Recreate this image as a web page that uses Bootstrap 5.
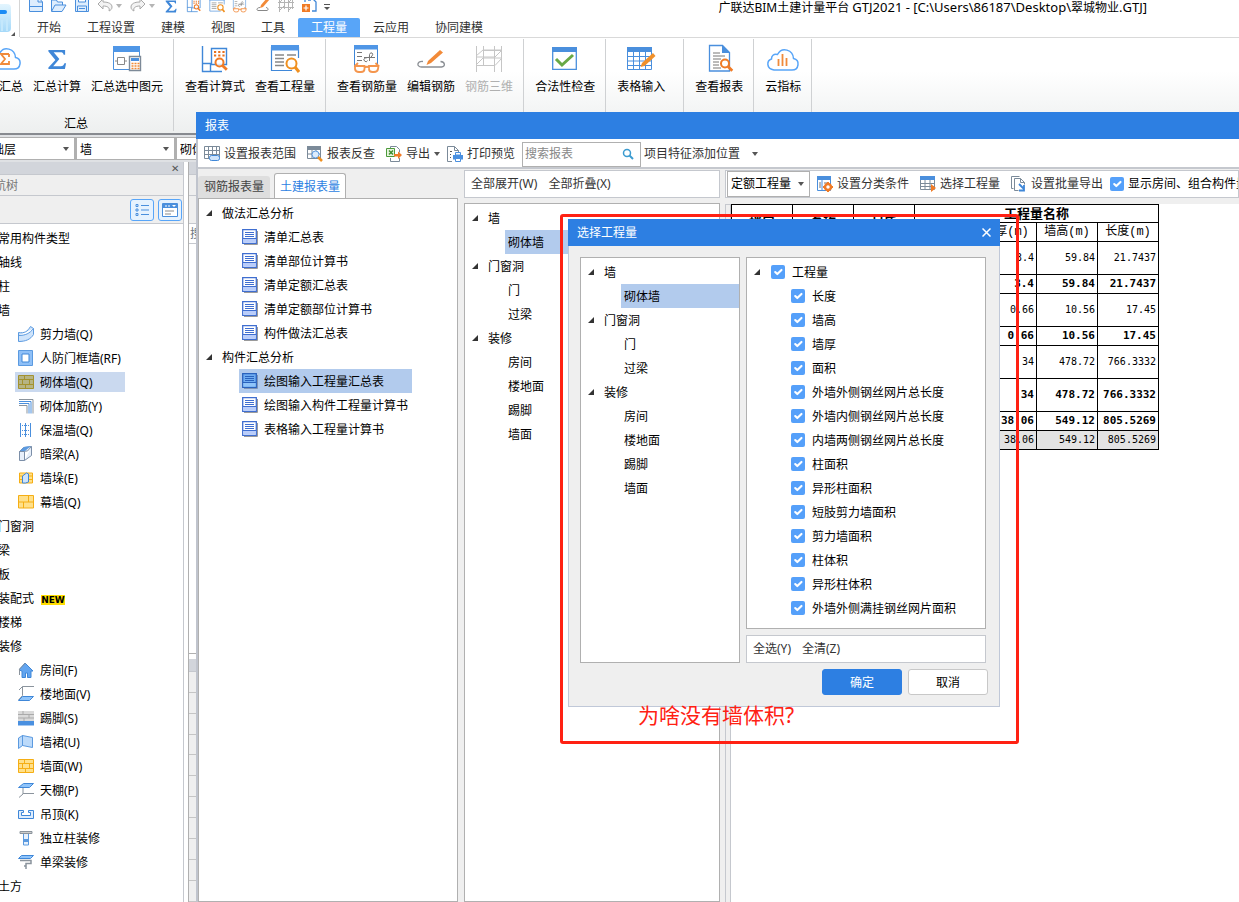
<!DOCTYPE html>
<html lang="zh-CN">
<head>
<meta charset="utf-8">
<meta name="viewport" content="width=device-width, initial-scale=1">
<title>广联达BIM土建计量平台 GTJ2021</title>
<link href="https://cdn.jsdelivr.net/npm/bootstrap@5.3.0/dist/css/bootstrap.min.css" rel="stylesheet">
<style>
  :root { --brand: #2d7fe2; --pick: #b2cbed; --face: #efefef; --edge: #b0b0b0; --soft: #c5c8ce; }
  body { font: 12px/24px "Noto Sans", "Noto Sans CJK SC", sans-serif; color: #000; background: #fff; }
  ul { list-style: none; margin: 0; padding: 0; }
  button, input, select { font: inherit; color: inherit; }
  svg { display: block; flex: none; }
  .ic16 { width: 16px; height: 16px; }
  .ic30 { width: 30px; height: 30px; }
  .plain-btn { border: 0; background: none; padding: 0; white-space: nowrap; line-height: 18px; }
  .caret { width: 0; height: 0; border: 3px solid transparent; border-top: 4px solid #555; border-bottom: 0; flex: none; }
  .caret-pale { border-top-color: #b5b5b5; }

  /* title area */
  .app-logo { width: 20px; height: 37px; border-right: 1px solid #d5d5d5; }
  .top-row { height: 18px; padding-left: 4px; }
  .quick { width: 23px; height: 13px; display: flex; justify-content: center; align-items: end; }
  .app-title { margin: 0 92px 0 auto; font-size: 12px; font-weight: 400; line-height: 14px; height: 18px; white-space: nowrap; }
  .app-path { font-size: 13px; }
  .menu-tabs { height: 20px; padding-left: 4px; border-bottom: 1px solid #d9d9d9; }
  .menu-tabs a { padding: 0 13px; line-height: 19px; color: #333; text-decoration: none; white-space: nowrap; }
  .menu-tabs a.on { background: #58a5f8; color: #fff; border-radius: 2px 2px 0 0; }

  /* ribbon */
  .ribbon { height: 97px; padding-top: 1px; background: linear-gradient(#fff 35%, #edefef); border-bottom: 2px solid #878a90; }
  .rgroup { padding: 5px 5px 0 6px; height: 92px; border-right: 1px solid #cfd1d3; }
  .rgroup.cut { margin-left: -24px; }
  .rgroup.wide { min-width: 78px; }
  .ritem { padding: 0 5px; display: flex; flex-direction: column; align-items: center; line-height: 26px; }
  .ritem:disabled { color: #b0b0b0; }
  .rlabel { line-height: 18px; padding: 15px 0 0 2px; text-align: center; }

  /* selector row */
  .pick-row { height: 27px; padding: 2px 0 1px; margin-left: -24px; background: #dfe1e4; }
  .pick-row select { width: 100px; height: 23px; border: 1px solid var(--edge); border-right-width: 2px; padding: 0 3px; border-radius: 0; }
  .flat-select { appearance: none; background: #fff url("data:image/svg+xml,%3Csvg xmlns='http://www.w3.org/2000/svg' width='6' height='4'%3E%3Cpath d='M0 0h6L3 4z' fill='%23555'/%3E%3C/svg%3E") no-repeat right 5px center; }

  /* navigation */
  .nav-panel { width: 184px; border-right: 1px solid var(--soft); overflow: hidden; }
  .pane-cap { height: 13px; background: #d2d5db; border-bottom: 1px solid var(--soft); line-height: 12px; font-size: 10px; color: #555; }
  .nav-name { height: 21px; line-height: 21px; background: var(--face); color: #777; border-bottom: 1px solid var(--soft); margin-left: -18px; }
  .nav-tools { height: 28px; background: var(--face); border-bottom: 1px solid var(--soft); gap: 4px; padding: 0 1px; }
  .mode-btn { width: 24px; height: 22px; border: 1px solid #58a5f8; border-radius: 3px; background: #e6f2fe; padding: 0; display: flex; align-items: center; justify-content: center; }
  .nav-tree { padding-top: 2px; margin-left: -2px; }
  .nav-tree li { white-space: nowrap; height: 24px; line-height: 26px; }
  .nav-tree .kid { display: flex; align-items: start; gap: 6px; margin-left: 17px; padding-left: 3px; width: 110px; }
  .nav-tree svg { align-self: center; }
  .nav-tree .kid.on { height: 20px; line-height: 22px; margin-top: 2px; margin-bottom: 2px; background: #cad9ef; }
  .new-tag { font: bold 9px/10px "DejaVu Sans", sans-serif; background: #fd0; margin-left: 4px; }
  .under { width: 120px; margin-left: 4px; border-left: 1px solid var(--edge); }
  .under-list { flex: 0 0 410px; border-bottom: 1px solid var(--edge); margin-bottom: 5px; }
  .under-row { height: 21px; background: var(--face); border-bottom: 1px solid #c5c5c5; }

  /* report window */
  .report { left: 196px; top: 112px; right: 0; bottom: 0; background: var(--face); overflow: hidden; }
  .side-rule { border-left: 2px solid #c0c4cd; }
  .win-cap { background: var(--brand); color: #fff; height: 27px; line-height: 27px; padding-left: 9px; }
  .bar { height: 30px; background: #fff; border-bottom: 2px solid var(--soft); padding: 2px 2px 0; gap: 3px; color: #333; flex: none; }
  .bar .plain-btn { display: flex; align-items: center; gap: 4px; padding: 4px; }
  .find { width: 119px; height: 25px; border: 1px solid var(--edge); background: #fff; padding: 0 6px 0 2px; }
  .find input { border: 0; width: 90px; padding: 0; outline: 0; background: none; }
  .find input::placeholder { color: #888; opacity: 1; }
  .tabs-row { height: 29px; padding-top: 4px; flex: none; }
  .tabs-row button { border: 0; background: #dedede; color: #444; padding: 0 6px; height: 22px; margin-top: 3px; line-height: 22px; border-radius: 3px 3px 0 0; }
  .tabs-row .on { background: #fff; color: var(--brand); border: 1px solid var(--edge); border-bottom: 0; height: 25px; margin: 0 0 0 4px; padding: 0 5px; line-height: 25px; }
  .frame { border: 1px solid var(--edge); background: #fff; }
  .strip { height: 28px; border: 1px solid var(--soft); background: #fff; color: #333; padding: 0 2px; gap: 3px; flex: none; }
  .strip .plain-btn { padding: 4px; display: flex; align-items: center; gap: 4px; }
  .c1 { width: 260px; } .c2 { width: 256px; margin: 1px 5px 0 6px; } .c3 { min-width: 0; margin-top: 1px; }
  .c2 .tree { margin-top: 5px; }
  .c3 .strip { padding-left: 1px; }
  .tree { padding-top: 2px; }
  .tree li { display: flex; align-items: start; height: 24px; line-height: 26px; white-space: nowrap; }
  .tree li > svg, .tree li > input, .tree .top::before { align-self: center; }
  .tree .top::before { content: ""; width: 0; height: 0; margin: 0 10px 0 7px; border-left: 6px solid transparent; border-bottom: 6px solid #333; }
  .tree .kid { margin-left: 40px; padding-left: 3px; }
  .tree .kid.doc { gap: 6px; width: 173px; }
  .tree .on { background: var(--pick); }
  .tree .tick { gap: 7px; }
  .tree .kid.tick { padding-left: 4px; }
  .form-check-input.sq { width: 14px; height: 14px; margin: 0; border: 0; border-radius: 2px; background-color: #55a0fa; flex: none; }
  .tree .top.tick::before { margin-right: 4px; }
  .unit { width: 83px; height: 26px; border: 1px solid var(--edge); padding: 0 3px; color: #000; }
  .sheet-area { margin-top: 6px; }
  .gutter { width: 6px; background: var(--face); border: 1px solid var(--soft); border-bottom: 0; }

  .sheet { border-collapse: collapse; table-layout: fixed; width: 428px; font: 10px/12px "DejaVu Sans Mono", "Noto Sans CJK SC", monospace; }
  .sheet th, .sheet td { border: 1px solid #000; padding: 0 2px; text-align: right; white-space: nowrap; overflow: hidden; height: 33px; }
  .sheet th { font-weight: bold; font-size: 13px; text-align: center; height: 18px; }
  .sheet .sub th { font-family: "Liberation Mono", "Noto Sans CJK SC", monospace; font-weight: normal; font-size: 12px; height: 19px; padding: 0; }
  .sheet .sum td { font-weight: bold; font-size: 11px; }
  .sheet .low td { height: 19px; }
  .sheet .end td { background: #e3e3e3; }

  /* quantity dialog */
  .qty { left: 372px; top: 107px; width: 432px; height: 488px; border: 1px solid #c0c8d8; background: var(--face); }
  .qty .win-cap { margin: -1px -1px 0; padding: 0 9px; }
  .qty-body { padding: 11px 13px 6px 11px; gap: 6px; }
  .qty .strip { margin-top: 6px; }
  .q-left { width: 160px; }
  .q-foot { gap: 6px; padding: 0 11px 11px; }
  .q-btn { width: 80px; height: 26px; border-radius: 3px; border: 1px solid #c8c8c8; background: #fff; line-height: 26px; padding: 0; }
  .q-btn.ok { background: var(--brand); border-color: var(--brand); color: #fff; }

  .callout { left: 560px; top: 214px; width: 459px; height: 530px; border: 3px solid #ff2113; border-radius: 3px; color: #ff2113; font-size: 21px; line-height: 30px; padding: 0 0 11px 75px; pointer-events: none; }
</style>
</head>
<body>
<svg width="0" height="0" class="position-absolute">
  <symbol id="doc" viewBox="0 0 16 16"><path d="M2 15.500h13.500V2" stroke="#9a9a9a" fill="none"/><path d="M.7.7h13.6v13.600H.7z" fill="#fff" stroke="#3f6ed0" stroke-width="1.300"/><path d="M1.300 10h12.400v3.700H1.300z" fill="#b9cdfb"/><path d="M3 3.500h9M3 5.500h9M3 7.500h9M1 9.500h13" stroke="#3f6ed0"/></symbol>
  <symbol id="docon" viewBox="0 0 16 16"><path d="M2 15.500h13.500V2" stroke="#7d93b5" fill="none"/><path d="M.7.7h13.600v13.600H.7z" fill="#6fadf2" stroke="#2a62bd" stroke-width="1.300"/><path d="M1.300 10h12.400v3.700H1.300z" fill="#8fc4fa"/><path d="M3 3.500h9M3 5.500h9M3 7.500h9M1 9.500h13" stroke="#2a62bd"/></symbol>
  <symbol id="brick" viewBox="0 0 16 14"><path d="M.5.500h15v13H.5zM.5 4.500h15M.5 9.500h15M6.500.5v4M11.500 4.500v5M4.500 4.500v5M7.500 9.500v4" fill="#ffe08a" stroke="#f5ae14"/></symbol>
  <symbol id="sigma" viewBox="0 0 20 22"><path d="M1 1h17.500v5h-1.500c-.5-2-1.500-2.600-3.500-2.600H6.500L12.500 10.500 6 18h8c2.200 0 3-.8 3.800-3H19.500L18.300 21H1v-1.500L8.300 11.500 1 2.500z" fill="#3f87d8"/></symbol>
  <symbol id="lens" viewBox="0 0 14 14"><circle cx="5.500" cy="5.500" r="4" fill="#fff" fill-opacity=".8" stroke="#f07b26" stroke-width="2"/><path d="M8.500 8.500l4.300 4.300" stroke="#f07b26" stroke-width="2.800"/></symbol>
  <symbol id="r-sel" viewBox="0 0 30 30"><path d="M1.500 3v22.500H17M27.500 3v11" fill="#fff" stroke="#4a8fdd"/><path d="M1 2h27v6H1z" fill="#4f96e6"/><path d="M5.500 13.500h7v7h-7zM3 17h2M13 17h2" fill="none" stroke="#888"/><path d="M17.500 12.500h11v14h-11z" fill="#fff" stroke="#7d8a98" stroke-width="1.400"/><path d="M19 14h8v3h-8z" fill="#4a8fdd"/><path d="M19.500 19.500h2m1 0h2m1 0h2M19.500 22h2m1 0h2m1 0h2M19.500 24.500h2m1 0h2m1 0h2" stroke="#f08a35" stroke-width="1.500"/></symbol>
  <symbol id="r-calc" viewBox="0 0 30 30"><path d="M2.500 2v25.500H22M2.500 19.500h8v8" fill="none" stroke="#3f87d8" stroke-width="1.400"/><path d="M11.500 4.500h15v16h-15z" fill="#fff" stroke="#3f87d8" stroke-width="1.400"/><path d="M14 8h2.200m2 0h2.200m2 0h2.200M14 11.500h2.200m2 0h2.200m2 0h2.200" stroke="#e8701c" stroke-width="2.200"/><use href="#lens" x="14" y="13" width="14" height="14"/></symbol>
  <symbol id="r-qty" viewBox="0 0 30 30"><path d="M1.500 3v23.500H22M28.500 3v11" fill="none" stroke="#3f87d8" stroke-width="1.200"/><path d="M1 1h28v5.500H1z" fill="#4f96e6"/><path d="M5 11h9M5 14.500h9M5 18h9M5 21.500h9M17 11h9" stroke="#888" stroke-width="1.300"/><circle cx="21.500" cy="19.500" r="5" fill="#fff" stroke="#f0901f" stroke-width="2"/><path d="M25 23l4 5" stroke="#f0901f" stroke-width="3"/></symbol>
  <symbol id="r-bar" viewBox="0 0 30 30"><path d="M2.500 3v20M25.500 3v20" stroke="#3f87d8"/><path d="M2 1h24v4.500H2z" fill="#4f96e6"/><path d="M5 8.500h5M5 12.500h5M5 16.500h5M12 13.500h11M17.500 17V10.500q1-2.500 2.500-1.500t0 3-2.500 1.500-4 .5-1 3 3-.5" fill="none" stroke="#777"/><path d="M3 22h9.500v3q0 3-3.500 3H7q-3.500 0-4-3zM17 22h9.500l-.5 3q-.5 3-4 3h-1.500q-3.500 0-3.500-3zM12.500 23.500q2.500-1.500 5 0M3 22l3-3M26.500 22l-3-3" fill="#fff" stroke="#f4954d" stroke-width="1.800"/></symbol>
  <symbol id="r-edit" viewBox="0 0 30 30"><path d="M7 17.500c-6-.5-7 5-1.500 5.500h20c4-.5 4-5-1-5.500" fill="none" stroke="#8b8f94" stroke-width="1.300"/><path d="M10.500 21l1.500-4L24 6l3 2.500L15 19z" fill="#f28a38"/></symbol>
  <symbol id="r-net" viewBox="0 0 30 30"><path d="M2.500 2v26M9.500 2v20M20.500 2v26M27.500 2v26M2 12l7-6h19l-7 7H2M2 21l7-7h19M2 21.500h19l7-7.500M9 6.500h19" fill="none" stroke="#c6c6c6"/></symbol>
  <symbol id="r-check" viewBox="0 0 30 30"><path d="M2.700 4v21.300h23.600V4" fill="#fff" stroke="#4a8fdd" stroke-width="1.300"/><path d="M2 3h25v5H2z" fill="#4a8fdd"/><path d="M6 15l6 6L23 11" fill="none" stroke="#68a845" stroke-width="3"/></symbol>
  <symbol id="r-table" viewBox="0 0 30 30"><path d="M1.500 4v21.500h24V4M1 12.500h24M1 17h24M1 21.500h24M7.500 7v18M13.500 7v18M19.500 7v18" fill="none" stroke="#4a8fdd"/><path d="M1 3h25v5H1z" fill="#4a8fdd"/><path d="M14.500 23l1.500-4L27 9l2.500 3L18.500 22z" fill="#f0902a"/></symbol>
  <symbol id="r-doc" viewBox="0 0 30 30"><path d="M5.500 1.500h13l7 7V27h-20z" fill="#fff" stroke="#4a8fdd" stroke-width="1.300"/><path d="M18 1v8h8" fill="#4a8fdd"/><path d="M9 9h7M9 12h12M9 15h8M9 18h6M9 21h6M9 24h8" stroke="#777"/><use href="#lens" x="15.500" y="14" width="14" height="14"/></symbol>
  <symbol id="r-cloud" viewBox="0 0 34 30"><path d="M8 26h18c7 0 8.500-10 1.500-11.500C27 6 16 2 11.500 10.500 7.500 9.500 5.500 12 5.500 15 .5 16.500 0 25 8 26z" fill="#fff" stroke="#58a5f8" stroke-width="1.500"/><path d="M12.500 22v-7M16.500 22V10M20.500 22v-8" stroke="#f08a3a" stroke-width="1.800"/></symbol>
  <symbol id="r-sum" viewBox="0 0 34 30"><path d="M8 25h18c7 0 8.500-10 1.500-11.500C27 5 16 1 11.500 9.500 7.500 8.500 5.500 11 5.500 14 .5 15.500 0 24 8 25z" fill="#fff" stroke="#58a5f8" stroke-width="1.500"/><path d="M21 10h-8l4 5-4 5h8v-3M21 10v3" fill="none" stroke="#f08a3a" stroke-width="1.800"/></symbol>
  <symbol id="grid" viewBox="0 0 16 16"><path d="M.5.500h15v12H.5zM.5 4.500h15M.5 8.500h15M4.500.500v12M8.500.500v12M12.500.500v12" fill="#fff" stroke="#7b8a99"/></symbol>
</svg>

<div class="position-relative d-flex flex-column vh-100 overflow-hidden">
  <header class="d-flex flex-shrink-0">
    <div class="app-logo">
      <svg width="18" height="37" viewBox="0 0 18 37"><defs><linearGradient id="lg" x1="0" y1="0" x2="0" y2="1"><stop offset="0" stop-color="#e3f5fe"/><stop offset="1" stop-color="#a5d9f9"/></linearGradient></defs><rect x="-12" y="4" width="23" height="28" rx="4" fill="url(#lg)"/><path d="M0 12h5" stroke="#1c8cf5" stroke-width="4" stroke-linecap="round"/><path d="M2 31V20M7 31V19" stroke="#c4e8fc" stroke-width="2"/><path d="M15 32v4h-4z" fill="#555"/></svg>
    </div>
    <div class="flex-grow-1">
      <div class="top-row d-flex">
        <button class="plain-btn quick" aria-label="新建"><svg width="16" height="14" viewBox="0 0 16 14"><path d="M1.500-2v14.500h13V3L10-2M10-2v5h4.500M1.500 7.500h13" fill="#deedfd" stroke="#4a8fdd"/></svg></button>
        <button class="plain-btn quick" aria-label="打开"><svg width="17" height="14" viewBox="0 0 17 14"><path d="M1.500 12V1h5l1 2h5v3M1.500 12.500L5 6h11l-4 6.500z" fill="#deedfd" stroke="#4a8fdd"/></svg></button>
        <button class="plain-btn quick" aria-label="保存"><svg width="16" height="14" viewBox="0 0 16 14"><path d="M1.500-2h13v14.500h-13zM4.500-1v4h7v-4M3.500 12V7h9v5M5 9.500h6" fill="#deedfd" stroke="#4a8fdd"/></svg></button>
        <button class="plain-btn quick" aria-label="撤销"><svg width="16" height="14" viewBox="0 0 16 14"><path d="M1 5l5-5v3c6 0 9 2 9 5 0 2-1 3-3 4 1-3-1-5-6-5v3z" fill="#f3f3f3" stroke="#a9a9a9"/></svg></button>
        <span class="caret caret-pale mt-1"></span><span class="ps-1"></span>
        <button class="plain-btn quick" aria-label="重做"><svg width="16" height="14" viewBox="0 0 16 14"><path d="M15 5l-5-5v3c-6 0-9 2-9 5 0 2 1 3 3 4-1-3 1-5 6-5v3z" fill="#f3f3f3" stroke="#a9a9a9"/></svg></button>
        <span class="caret caret-pale mt-1"></span><span class="ps-1"></span>
        <button class="plain-btn quick" aria-label="汇总"><svg width="12" height="13"><use href="#sigma"/></svg></button>
        <button class="plain-btn quick" aria-label="查看计算式"><svg class="ic16"><use href="#r-calc"/></svg></button>
        <button class="plain-btn quick" aria-label="查看工程量"><svg class="ic16"><use href="#r-qty"/></svg></button>
        <button class="plain-btn quick" aria-label="查看钢筋量"><svg class="ic16"><use href="#r-bar"/></svg></button>
        <button class="plain-btn quick" aria-label="编辑钢筋"><svg width="16" height="14" viewBox="0 0 16 14"><path d="M5 8.500c-3 0-4 2.500-2 3h9c2-.5 1-3-1-3" fill="none" stroke="#888"/><path d="M5 9l1-3 6-7 3 1-7 8z" fill="#f28a38"/></svg></button>
        <button class="plain-btn quick" aria-label="钢筋三维"><svg class="ic16" viewBox="0 0 16 16"><path d="M1.500 0v15M6.500 0v12M10.500 0v15M14.500 0v12M0 5.500h16M0 10.500h16M1 14L6 9M10 14l5-5M1 6l4-4M10 6l4-4M4 2.500h12" fill="none" stroke="#b5b5b5"/></svg></button>
        <button class="plain-btn quick" aria-label="添加"><svg width="16" height="14" viewBox="0 0 16 14"><path d="M4-1v4M12 0l3 3v9h-4M7 1h3" fill="none" stroke="#3f87d8" stroke-width="1.300"/><path d="M1 5h8v8H1z" fill="#f07b26"/><path d="M5 6.500v5M2.500 9h5" stroke="#fff" stroke-width="1.200"/></svg></button>
        <span class="ms-1 mt-1"><svg width="6" height="7"><path d="M0 .5h6" stroke="#555"/><path d="M0 3h6L3 6z" fill="#555"/></svg></span>
        <h1 class="app-title">广联达BIM土建计量平台 <span class="app-path">GTJ2021 - [C:\Users\86187\Desktop\</span>翠城物业<span class="app-path">.GTJ]</span></h1>
      </div>
      <nav class="menu-tabs d-flex">
        <a href="#">开始</a><a href="#">工程设置</a><a href="#">建模</a><a href="#">视图</a><a href="#">工具</a><a href="#" class="on">工程量</a><a href="#">云应用</a><a href="#">协同建模</a>
      </nav>
    </div>
  </header>

  <div class="ribbon d-flex flex-shrink-0">
    <div class="rgroup cut">
      <div class="d-flex">
        <button class="plain-btn ritem"><svg width="34" height="30"><use href="#r-sum"/></svg>云汇总</button>
        <button class="plain-btn ritem"><svg class="ic30" viewBox="0 0 30 30"><use href="#sigma" x="5" y="5" width="20" height="21"/></svg>汇总计算</button>
        <button class="plain-btn ritem"><svg class="ic30"><use href="#r-sel"/></svg>汇总选中图元</button>
      </div>
      <div class="rlabel">汇总</div>
    </div>
    <div class="rgroup d-flex align-items-start">
      <button class="plain-btn ritem"><svg class="ic30"><use href="#r-calc"/></svg>查看计算式</button>
      <button class="plain-btn ritem"><svg class="ic30"><use href="#r-qty"/></svg>查看工程量</button>
    </div>
    <div class="rgroup d-flex align-items-start">
      <button class="plain-btn ritem"><svg class="ic30"><use href="#r-bar"/></svg>查看钢筋量</button>
      <button class="plain-btn ritem"><svg class="ic30"><use href="#r-edit"/></svg>编辑钢筋</button>
      <button class="plain-btn ritem" disabled><svg class="ic30"><use href="#r-net"/></svg>钢筋三维</button>
    </div>
    <div class="rgroup d-flex align-items-start"><button class="plain-btn ritem"><svg class="ic30"><use href="#r-check"/></svg>合法性检查</button></div>
    <div class="rgroup wide d-flex align-items-start"><button class="plain-btn ritem"><svg class="ic30"><use href="#r-table"/></svg>表格输入</button></div>
    <div class="rgroup d-flex align-items-start"><button class="plain-btn ritem"><svg class="ic30"><use href="#r-doc"/></svg>查看报表</button></div>
    <div class="rgroup d-flex align-items-start"><button class="plain-btn ritem"><svg width="34" height="30"><use href="#r-cloud"/></svg>云指标</button></div>
  </div>

  <div class="pick-row d-flex flex-shrink-0">
    <select class="flat-select" aria-label="楼层"><option>基础层</option></select>
    <select class="flat-select" aria-label="构件类别"><option>墙</option></select>
    <select class="flat-select" aria-label="构件类型"><option>砌体墙</option></select>
  </div>

  <main class="d-flex flex-grow-1 overflow-hidden">
    <aside class="nav-panel">
      <div class="pane-cap text-end pe-1">✕</div>
      <div class="nav-name">导航树</div>
      <div class="nav-tools d-flex align-items-center justify-content-end">
        <button class="mode-btn" aria-label="列表"><svg width="14" height="14"><path d="M1 1.500h2v2H1zM1 6h2v2H1zM1 10.500h2v2H1z" fill="none" stroke="#4a8fdd"/><path d="M6 2.500h8M6 7h8M6 11.500h8" stroke="#4a8fdd"/></svg></button>
        <button class="mode-btn" aria-label="窗口"><svg width="16" height="14"><path d="M.5.500h15v13H.5z" fill="#fff" stroke="#4a8fdd"/><path d="M1 1h14v4H1z" fill="#4a8fdd"/><path d="M3 3h2m1 0h2" stroke="#fff"/><path d="M10 2h4l-2 2z" fill="#fff"/><path d="M3 8h9M3 11h6" stroke="#8a8a8a"/></svg></button>
      </div>
      <ul class="nav-tree">
        <li>常用构件类型</li><li>轴线</li><li>柱</li><li>墙</li>
        <li class="kid"><svg class="ic16"><path d="M.5 6.500c6 1 9-1 12-6l3 2v6c-3 5-8 7-15 7zM.5 9.500c7 0 11-2 15-7" fill="#cfe4fb" stroke="#5b9ae0"/></svg>剪力墙(Q)</li>
        <li class="kid"><svg class="ic16"><path d="M.5.500h14v15H.5z" fill="#8fc0f7" stroke="#5b9ae0"/><path d="M4 4h7v8H4z" fill="#fff" stroke="#3f87d8"/></svg>人防门框墙(RF)</li>
        <li class="kid on"><svg class="ic16" viewBox="0 0 16 14"><path d="M.5.500h15v13H.5zM.5 4.500h15M.5 9.500h15M6.500.5v4M11.500 4.500v5M4.500 4.500v5M7.500 9.500v4" fill="#b6b484" stroke="#a3922f"/></svg>砌体墙(Q)</li>
        <li class="kid"><svg class="ic16"><path d="M1 1.500h14v14M1 7.500h8v8" fill="none" stroke="#8b949d"/><path d="M1 3.500h12v12M1 5.500h10v10" fill="none" stroke="#4a8fdd"/></svg>砌体加筋(Y)</li>
        <li class="kid"><svg class="ic16"><path d="M2.500 1v14M7.500 1v14M12.500 1v14" stroke="#4a8fdd"/><path d="M2 3.500h12M2 8.500h12M2 12.500h12" stroke="#4a8fdd" stroke-dasharray="1 1"/></svg>保温墙(Q)</li>
        <li class="kid"><svg class="ic16"><path d="M1.500 5.500l4-4 8-1-4 4.500zM1.500 5.500h5v9h-5zM6.500 14.500l7-5v-9" fill="#e7effa" stroke="#7c8fa8"/><path d="M2 5l4-4 7-1-6 5z" fill="#5b9ae0"/></svg>暗梁(A)</li>
        <li class="kid"><svg class="ic16"><path d="M1.500 3h13v10h-13zM1 6h13M1 9.500h13" fill="#ffe08a" stroke="#f5ae14"/><path d="M4.500 6l4-3 2 1v8l-3 1h-3z" fill="#cfe4fb" stroke="#3f87d8"/></svg>墙垛(E)</li>
        <li class="kid"><svg class="ic16" viewBox="0 0 16 14"><path d="M.5.500h15v12.500H.5zM.5 7h15M5.500 7v6M10.500.5V7" fill="#ffe08a" stroke="#f5ae14"/></svg>幕墙(Q)</li>
        <li>门窗洞</li><li>梁</li><li>板</li><li>装配式 <span class="new-tag">NEW</span></li><li>楼梯</li><li>装修</li>
        <li class="kid"><svg class="ic16"><path d="M1 8l6-7 8 8h-2v6.500H9.500V11h-2v4.500H4V9z" fill="#62a5f0" stroke="#3f87d8"/><path d="M1.500 13V7l6-6" stroke="#8b949d" fill="none"/></svg>房间(F)</li>
        <li class="kid"><svg class="ic16"><path d="M16 .5H4.500v9L.5 14M1 4l3.500-3.500" stroke="#8b949d" fill="none"/><path d="M.5 14.500l4-4h11l-4 4z" fill="#8fc4fa" stroke="#3f87d8"/></svg>楼地面(V)</li>
        <li class="kid"><svg class="ic16"><path d="M0 1h16v14H0z" fill="#dadada"/><path d="M0 4.500h16M0 8h16M5 1v3.500M11 4.500V8M6 8v3" stroke="#aaa"/><path d="M0 11h16v4.500H0z" fill="#4a90e0"/></svg>踢脚(S)</li>
        <li class="kid"><svg class="ic16"><path d="M.5 4l4-2.500v10l-4 3zM4.500 1.500l10 2v10l-10-2z" fill="#bcdafa" stroke="#5b9ae0"/></svg>墙裙(U)</li>
        <li class="kid"><svg class="ic16"><use href="#brick"/></svg>墙面(W)</li>
        <li class="kid"><svg class="ic16"><path d="M16 11.500H5M5 5v7l-4 3.500" stroke="#8b949d" fill="none"/><path d="M.5 5.500l5-4h10l-4 4z" fill="#8fc4fa" stroke="#3f87d8"/></svg>天棚(P)</li>
        <li class="kid"><svg class="ic16"><path d="M.5 4.500h5v2h-2v3h9v-3h-2v-2h5v8H.5z" fill="#deedfd" stroke="#3f87d8"/></svg>吊顶(K)</li>
        <li class="kid"><svg class="ic16"><path d="M2 1.500h12v2H2z" fill="#ccc" stroke="#8b949d"/><path d="M5.500 4v11h5V4" fill="#e7f1fc" stroke="#5b9ae0"/><path d="M6 9h4v3H6z" fill="#5b9ae0"/></svg>独立柱装修</li>
        <li class="kid"><svg class="ic16"><path d="M.5 4.500l3-3h12l-3 3z" fill="#8fc4fa" stroke="#3f87d8"/><path d="M2 6.500h11v3H8v3M6 12h2v3" fill="none" stroke="#8b949d" stroke-width="1.500"/></svg>单梁装修</li>
        <li>土方</li>
      </ul>
    </aside>
    <section class="under d-flex flex-column">
      <div class="pane-cap"></div>
      <div class="nav-tools" style="height:21px"></div>
      <div class="nav-tools"></div>
      <div class="nav-tools bg-white text-secondary" style="height:20px;line-height:20px">搜索</div>
      <div class="under-list"></div>
      <div class="pane-cap flex-shrink-0"></div>
      <div class="under-row"></div><div class="under-row"></div><div class="under-row"></div><div class="under-row"></div><div class="under-row"></div><div class="under-row"></div><div class="under-row"></div><div class="under-row"></div><div class="under-row"></div><div class="under-row"></div><div class="under-row"></div>
    </section>
  </main>

  <section class="report position-absolute d-flex flex-column">
    <div class="win-cap">报表</div>
    <div class="bar side-rule d-flex align-items-center">
      <button class="plain-btn"><svg class="ic16"><use href="#grid"/><rect x="5.500" y="9.500" width="10" height="5" rx="2" fill="#cfe4fb" stroke="#3f87d8"/></svg>设置报表范围</button>
      <button class="plain-btn"><svg class="ic16"><path d="M.5.500h13v12H.5zM5 1v12M9 1v12M1 8h12" fill="#fff" stroke="#7b8a99"/><path d="M0 0h14v4H0z" fill="#7b8a99"/><circle cx="8.500" cy="8.500" r="3.500" fill="#deedfd" stroke="#5b9ae0"/><path d="M11 11l4 4" stroke="#f0901f" stroke-width="2.500"/></svg>报表反查</button>
      <button class="plain-btn"><svg class="ic16"><path d="M4.500 2.500v-2h6l3 3v3M13.500 12v3.500h-9V12" fill="none" stroke="#7b8a99"/><path d="M.5 2.500h8v8h-8z" fill="#e7f5df" stroke="#4c9a3a"/><path d="M3 4.500l4 4m0-4l-4 4" stroke="#3f8f2f" stroke-width="1.500"/><path d="M8 8h4V5.500l4 3.500-4 4V10.500H8z" fill="#f07b26"/></svg>导出<span class="caret"></span></button>
      <button class="plain-btn ps-0"><svg class="ic16"><path d="M5 15.500H.5V.5h7l4 4v2M7.500.5v4h4" fill="none" stroke="#7b8a99"/><path d="M3 5.500h2M3 8.500h1M3 11.500h1" stroke="#555"/><path d="M6 9h10v4.500H6z" fill="#4a90e0"/><path d="M8.500 6.500h5V9h-5zM8.500 12.500h5v3h-5z" fill="#fff" stroke="#4a90e0"/></svg>打印预览</button>
      <label class="find d-flex align-items-center justify-content-between"><input type="text" placeholder="搜索报表" aria-label="搜索报表"><svg width="12" height="12"><circle cx="5" cy="5" r="3.500" fill="none" stroke="#3b9bd0" stroke-width="1.500"/><path d="M7.500 7.500l3.500 3.500" stroke="#3b9bd0" stroke-width="2"/></svg></label>
      <button class="plain-btn ps-0 gap-2">项目特征添加位置<span class="caret ms-1"></span></button>
    </div>
    <div class="side-rule d-flex flex-grow-1 overflow-hidden">
      <div class="c1 d-flex flex-column flex-shrink-0">
        <div class="tabs-row d-flex"><button>钢筋报表量</button><button class="on">土建报表量</button></div>
        <ul class="tree frame flex-grow-1">
          <li class="top">做法汇总分析</li>
          <li class="kid doc"><svg class="ic16"><use href="#doc"/></svg>清单汇总表</li>
          <li class="kid doc"><svg class="ic16"><use href="#doc"/></svg>清单部位计算书</li>
          <li class="kid doc"><svg class="ic16"><use href="#doc"/></svg>清单定额汇总表</li>
          <li class="kid doc"><svg class="ic16"><use href="#doc"/></svg>清单定额部位计算书</li>
          <li class="kid doc"><svg class="ic16"><use href="#doc"/></svg>构件做法汇总表</li>
          <li class="top">构件汇总分析</li>
          <li class="kid doc on"><svg class="ic16"><use href="#docon"/></svg>绘图输入工程量汇总表</li>
          <li class="kid doc"><svg class="ic16"><use href="#doc"/></svg>绘图输入构件工程量计算书</li>
          <li class="kid doc"><svg class="ic16"><use href="#doc"/></svg>表格输入工程量计算书</li>
        </ul>
      </div>
      <div class="c2 d-flex flex-column flex-shrink-0">
        <div class="strip d-flex align-items-center"><button class="plain-btn">全部展开(W)</button><button class="plain-btn">全部折叠(X)</button></div>
        <ul class="tree frame flex-grow-1">
          <li class="top">墙</li><li class="kid on">砌体墙</li>
          <li class="top">门窗洞</li><li class="kid">门</li><li class="kid">过梁</li>
          <li class="top">装修</li><li class="kid">房间</li><li class="kid">楼地面</li><li class="kid">踢脚</li><li class="kid">墙面</li>
        </ul>
      </div>
      <div class="c3 flex-grow-1 d-flex flex-column">
        <div class="strip d-flex align-items-center overflow-hidden">
          <select class="flat-select unit flex-shrink-0" aria-label="工程量类别"><option>定额工程量</option></select>
          <button class="plain-btn ps-1"><svg class="ic16"><path d="M.5.500h13v14H.5zM5 4v11" fill="#fff" stroke="#4a8fdd"/><path d="M0 0h14v4H0z" fill="#4a8fdd"/><path d="M2 7h2M2 9h2M2 11h2M7 7h4" stroke="#777"/><circle cx="11" cy="11" r="3" fill="#fff" stroke="#f07b26" stroke-width="2.500"/><path d="M11 6v2m0 6v2M6 11h2m6 0h2" stroke="#f07b26" stroke-width="2"/></svg>设置分类条件</button>
          <button class="plain-btn"><svg class="ic16"><path d="M.5.500h14v13H.5zM5 4v10M10 4v10M0 7.500h15M0 10.500h15" fill="#fff" stroke="#7b8a99"/><path d="M0 0h15v4H0z" fill="#4a8fdd"/><path d="M11 8l5 4-5 4z" fill="#f07b26"/></svg>选择工程量</button>
          <button class="plain-btn"><svg class="ic16"><path d="M2.500 12.500h-2V.5h8M3.500 2.500h6l4 4v2M3.500 2.500v12h4M9.500 2.500v4h4" fill="none" stroke="#7b8a99"/><path d="M8 8l5 5m0-4v5.500H8" fill="none" stroke="#3f87d8" stroke-width="1.800"/></svg>设置批量导出</button>
          <label class="d-flex align-items-center gap-1 text-nowrap text-black"><input type="checkbox" class="form-check-input sq" checked>显示房间、组合构件量</label>
        </div>
        <div class="sheet-area d-flex flex-grow-1 bg-white">
          <div class="gutter"></div>
          <div>
            <table class="sheet">
              <thead>
                <tr><th rowspan="2">楼层</th><th rowspan="2">名称</th><th rowspan="2">材质</th><th colspan="4">工程量名称</th></tr>
                <tr class="sub"><th></th><th>墙厚(m)</th><th>墙高(m)</th><th>长度(m)</th></tr>
              </thead>
              <tbody>
                <tr><td></td><td></td><td></td><td></td><td>3.4</td><td>59.84</td><td>21.7437</td></tr>
                <tr class="sum low"><td></td><td></td><td></td><td></td><td>3.4</td><td>59.84</td><td>21.7437</td></tr>
                <tr><td></td><td></td><td></td><td></td><td>0.66</td><td>10.56</td><td>17.45</td></tr>
                <tr class="sum low"><td></td><td></td><td></td><td></td><td>0.66</td><td>10.56</td><td>17.45</td></tr>
                <tr><td></td><td></td><td></td><td></td><td>34</td><td>478.72</td><td>766.3332</td></tr>
                <tr class="sum"><td></td><td></td><td></td><td></td><td>34</td><td>478.72</td><td>766.3332</td></tr>
                <tr class="sum low"><td></td><td></td><td></td><td></td><td>38.06</td><td>549.12</td><td>805.5269</td></tr>
                <tr class="low end"><td></td><td></td><td></td><td></td><td>38.06</td><td>549.12</td><td>805.5269</td></tr>
              </tbody>
            </table>
          </div>
        </div>
      </div>
    </div>

    <div class="qty position-absolute d-flex flex-column" role="dialog" aria-label="选择工程量">
      <div class="win-cap d-flex justify-content-between align-items-center">选择工程量
        <button class="plain-btn" aria-label="关闭"><svg width="9" height="9"><path d="M.5.500l8 8m0-8l-8 8" stroke="#fff" stroke-width="1.500"/></svg></button></div>
      <div class="qty-body d-flex flex-grow-1">
        <ul class="tree frame q-left">
          <li class="top">墙</li><li class="kid on">砌体墙</li>
          <li class="top">门窗洞</li><li class="kid">门</li><li class="kid">过梁</li>
          <li class="top">装修</li><li class="kid">房间</li><li class="kid">楼地面</li><li class="kid">踢脚</li><li class="kid">墙面</li>
        </ul>
        <div class="flex-grow-1 d-flex flex-column">
          <ul class="tree frame flex-grow-1">
            <li class="top tick"><input class="form-check-input sq" type="checkbox" id="q0" checked><label for="q0">工程量</label></li>
            <li class="kid tick"><input class="form-check-input sq" type="checkbox" id="q1" checked><label for="q1">长度</label></li>
            <li class="kid tick"><input class="form-check-input sq" type="checkbox" id="q2" checked><label for="q2">墙高</label></li>
            <li class="kid tick"><input class="form-check-input sq" type="checkbox" id="q3" checked><label for="q3">墙厚</label></li>
            <li class="kid tick"><input class="form-check-input sq" type="checkbox" id="q4" checked><label for="q4">面积</label></li>
            <li class="kid tick"><input class="form-check-input sq" type="checkbox" id="q5" checked><label for="q5">外墙外侧钢丝网片总长度</label></li>
            <li class="kid tick"><input class="form-check-input sq" type="checkbox" id="q6" checked><label for="q6">外墙内侧钢丝网片总长度</label></li>
            <li class="kid tick"><input class="form-check-input sq" type="checkbox" id="q7" checked><label for="q7">内墙两侧钢丝网片总长度</label></li>
            <li class="kid tick"><input class="form-check-input sq" type="checkbox" id="q8" checked><label for="q8">柱面积</label></li>
            <li class="kid tick"><input class="form-check-input sq" type="checkbox" id="q9" checked><label for="q9">异形柱面积</label></li>
            <li class="kid tick"><input class="form-check-input sq" type="checkbox" id="q10" checked><label for="q10">短肢剪力墙面积</label></li>
            <li class="kid tick"><input class="form-check-input sq" type="checkbox" id="q11" checked><label for="q11">剪力墙面积</label></li>
            <li class="kid tick"><input class="form-check-input sq" type="checkbox" id="q12" checked><label for="q12">柱体积</label></li>
            <li class="kid tick"><input class="form-check-input sq" type="checkbox" id="q13" checked><label for="q13">异形柱体积</label></li>
            <li class="kid tick"><input class="form-check-input sq" type="checkbox" id="q14" checked><label for="q14">外墙外侧满挂钢丝网片面积</label></li>
          </ul>
          <div class="strip d-flex align-items-center"><button class="plain-btn">全选(Y)</button><button class="plain-btn">全清(Z)</button></div>
        </div>
      </div>
      <div class="q-foot d-flex justify-content-end"><button class="q-btn ok">确定</button><button class="q-btn">取消</button></div>
    </div>
  </section>

  <div class="callout position-absolute d-flex align-items-end">为啥没有墙体积?</div>
</div>
<script src="https://cdn.jsdelivr.net/npm/bootstrap@5.3.0/dist/js/bootstrap.bundle.min.js"></script>
</body>
</html>
